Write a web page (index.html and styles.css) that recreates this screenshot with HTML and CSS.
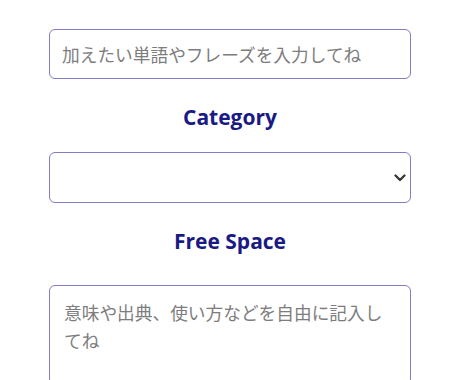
FILE: index.html
```html
<!DOCTYPE html>
<html lang="ja">
<head>
<meta charset="utf-8">
<link rel="stylesheet" href="styles.css">
</head>
<body>
<form class="form">
  <input class="field field-input" type="text" placeholder="加えたい単語やフレーズを入力してね">
  <label class="label label-category">Category</label>
  <div class="select-wrap">
    <select class="field field-select"><option></option></select>
    <svg class="chevron" width="12" height="8" viewBox="0 0 12 8"><path d="M1.5 1.5 L6 6 L10.5 1.5" fill="none" stroke="#333" stroke-width="2.2" stroke-linecap="round" stroke-linejoin="round"/></svg>
  </div>
  <label class="label label-free">Free Space</label>
  <textarea class="field field-textarea" placeholder="意味や出典、使い方などを自由に記入してね"></textarea>
</form>
</body>
</html>
```
FILE: styles.css
```css
html, body {
  margin: 0;
  padding: 0;
  background: #fff;
}
body {
  font-family: "Noto Sans CJK JP", "Noto Sans", sans-serif;
}
.form {
  width: 362px;
  margin-left: 49px;
  padding-top: 29px;
  display: flex;
  flex-direction: column;
}
.field {
  box-sizing: border-box;
  width: 362px;
  border: 1.5px solid #807cc6;
  border-radius: 6px;
  background: #fff;
  font-family: "Noto Sans CJK JP", sans-serif;
  font-size: 17.7px;
  color: #333;
  outline: none;
  margin: 0;
}
.field::placeholder {
  color: #7d7d7d;
}
.field-input {
  height: 50px;
  padding: 0 12px;
}
.select-wrap {
  position: relative;
}
.field-select {
  height: 51px;
  appearance: none;
  -webkit-appearance: none;
  padding: 0 12px;
  display: block;
}
.chevron {
  position: absolute;
  right: 5px;
  top: 22px;
}
.field-textarea {
  height: 100px;
  padding: 12px 14px;
  line-height: 28px;
  resize: none;
  display: block;
}
.label {
  font-family: "Open Sans", "Noto Sans", sans-serif;
  font-weight: 700;
  font-size: 21px;
  line-height: 30px;
  color: #1a1a84;
  text-align: center;
}
.label-category {
  margin: 23px 0 20px;
}
.label-free {
  margin: 23px 0 29px;
}
```
